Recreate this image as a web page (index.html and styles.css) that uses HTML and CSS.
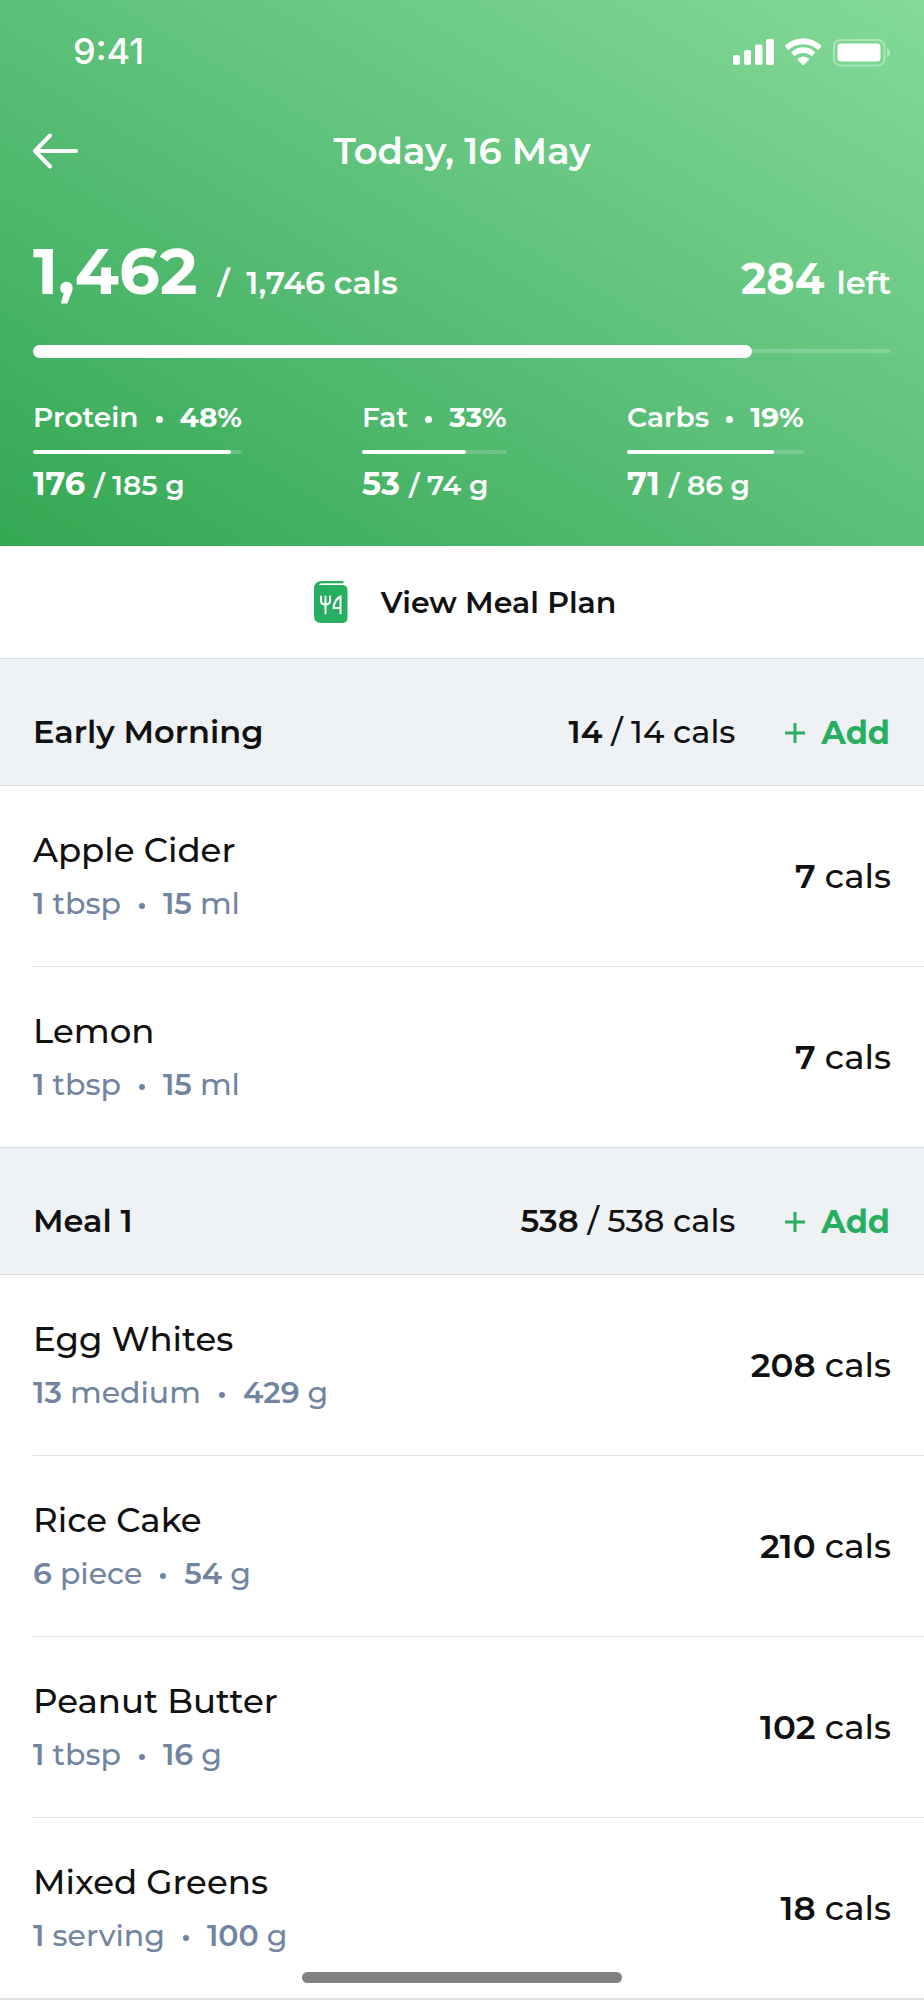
FILE: index.html
```html
<!DOCTYPE html>
<html lang="en">
<head>
<meta charset="utf-8">
<meta name="viewport" content="width=device-width, initial-scale=1">
<title>Today, 16 May</title>
<link rel="stylesheet" href="styles.css">
</head>
<body>
<div class="screen">
  <header class="hero">
    <div class="status">
      <span class="status-time">9:41</span>
      <svg class="status-icons" width="158" height="32" viewBox="0 -4 158 32" fill="#fff" aria-hidden="true">
        <rect x="0" y="16" width="7" height="10" rx="2"/>
        <rect x="11" y="11" width="7" height="15" rx="2"/>
        <rect x="22" y="5.500" width="7.500" height="20.500" rx="2"/>
        <rect x="33" y="0" width="8" height="26" rx="2"/>
        <path d="M52.500 8Q51.600 7 52.600 6A26 26 0 0 1 87.800 6Q88.800 7 87.900 8L85.200 11.300A21.500 21.500 0 0 0 55.200 11.300Z"/>
        <path d="M58.600 14Q58 13.400 58.800 12.700A17 17 0 0 1 81.600 12.700Q82.400 13.400 81.800 14L78.800 17.300A13 13 0 0 0 61.600 17.300Z"/>
        <path d="M64.300 20.600Q64 20 64.800 19.500A9 9 0 0 1 75.600 19.500Q76.400 20 76.100 20.600L70.900 26Q70.200 26.500 69.500 26Z"/>
        <rect x="101" y="1" width="50.500" height="25.500" rx="6.500" fill="none" stroke="#fff" stroke-opacity=".35" stroke-width="2"/>
        <rect x="104.500" y="4.500" width="43" height="18" rx="3.500"/>
        <path d="M154 9.300q3.200 1.500 3.200 4.500t-3.200 4.500z" fill-opacity=".4"/>
      </svg>
    </div>
    <nav class="titlebar">
      <button class="back" type="button" aria-label="Back">
        <svg width="46" height="36" viewBox="0 0 46 36" fill="none" stroke="#fff" stroke-width="4" stroke-linecap="round" stroke-linejoin="round" aria-hidden="true"><path d="M17 2.500 2 18l15 15.500M2 18H43"/></svg>
      </button>
      <h1 class="title">Today, 16 May</h1>
    </nav>
    <div class="summary">
      <p class="eaten"><strong class="eaten-value">1,462</strong><span class="slash">/</span><span>1,746 cals</span></p>
      <p class="left"><strong class="left-value">284 </strong>left</p>
    </div>
    <div class="bar bar-large" role="progressbar" aria-label="Calories" aria-valuenow="1462" aria-valuemax="1746"><div class="bar-fill" style="width:83.800%"></div></div>
    <div class="macros">
      <div class="macro">
        <p class="macro-name">Protein<i class="dot"></i><b>48%</b></p>
        <div class="bar" role="progressbar" aria-label="Protein" aria-valuenow="176" aria-valuemax="185"><div class="bar-fill" style="width:95%"></div></div>
        <p class="macro-amount"><b>176 </b>/ 185 g</p>
      </div>
      <div class="macro">
        <p class="macro-name">Fat<i class="dot"></i><b>33%</b></p>
        <div class="bar" role="progressbar" aria-label="Fat" aria-valuenow="53" aria-valuemax="74"><div class="bar-fill" style="width:72%"></div></div>
        <p class="macro-amount"><b>53 </b>/ 74 g</p>
      </div>
      <div class="macro">
        <p class="macro-name">Carbs<i class="dot"></i><b>19%</b></p>
        <div class="bar" role="progressbar" aria-label="Carbs" aria-valuenow="71" aria-valuemax="86"><div class="bar-fill" style="width:83%"></div></div>
        <p class="macro-amount"><b>71 </b>/ 86 g</p>
      </div>
    </div>
  </header>

  <a class="plan" href="#plan">
    <svg width="34" height="42" viewBox="0 0 34 42" fill="none" aria-hidden="true">
      <path d="M29 0H8Q0 0 0 8V35Q0 42 7 42H28Q33.500 42 33.500 37V9Q33.500 4 28 4H5Q6 2.300 9 2.300H29Q30.500 1 29 0Z" fill="#27ae60"/>
      <path d="M5 3.800Q6 2.500 9 2.500H29.500" stroke="#b9e6cb" stroke-width="1"/>
      <path d="M7 15.500v4q0 4 4.500 4t4.500-4v-4M11.500 15.500V32.500M26.500 32.500V15.500Q20.500 18.500 19.500 27H26.500" stroke="#fff" stroke-width="2" stroke-linecap="round" stroke-linejoin="round"/>
    </svg>
    <span>View Meal Plan</span>
  </a>

  <main>
    <section>
      <div class="meal">
        <h2 class="meal-name">Early Morning</h2>
        <p class="meal-cals"><b>14 </b>/ 14 cals</p>
        <button class="add" type="button"><svg width="20" height="20" viewBox="0 0 20 20" stroke="#27ae60" stroke-width="3" aria-hidden="true"><path d="M10 0v20M0 10h20"/></svg>Add</button>
      </div>
      <ul class="foods">
        <li class="food"><div><h3 class="food-name">Apple Cider</h3><p class="food-size"><b>1</b> tbsp<i class="dot"></i><b>15</b> ml</p></div><p class="food-cals"><b>7</b> cals</p></li>
        <li class="food"><div><h3 class="food-name">Lemon</h3><p class="food-size"><b>1</b> tbsp<i class="dot"></i><b>15</b> ml</p></div><p class="food-cals"><b>7</b> cals</p></li>
      </ul>
    </section>
    <section>
      <div class="meal">
        <h2 class="meal-name">Meal 1</h2>
        <p class="meal-cals"><b>538 </b>/ 538 cals</p>
        <button class="add" type="button"><svg width="20" height="20" viewBox="0 0 20 20" stroke="#27ae60" stroke-width="3" aria-hidden="true"><path d="M10 0v20M0 10h20"/></svg>Add</button>
      </div>
      <ul class="foods">
        <li class="food"><div><h3 class="food-name">Egg Whites</h3><p class="food-size"><b>13</b> medium<i class="dot"></i><b>429</b> g</p></div><p class="food-cals"><b>208</b> cals</p></li>
        <li class="food"><div><h3 class="food-name">Rice Cake</h3><p class="food-size"><b>6</b> piece<i class="dot"></i><b>54</b> g</p></div><p class="food-cals"><b>210</b> cals</p></li>
        <li class="food"><div><h3 class="food-name">Peanut Butter</h3><p class="food-size"><b>1</b> tbsp<i class="dot"></i><b>16</b> g</p></div><p class="food-cals"><b>102</b> cals</p></li>
        <li class="food"><div><h3 class="food-name">Mixed Greens</h3><p class="food-size"><b>1</b> serving<i class="dot"></i><b>100</b> g</p></div><p class="food-cals"><b>18</b> cals</p></li>
      </ul>
    </section>
  </main>
  <div class="home-indicator"></div>
</div>
</body>
</html>
```
FILE: styles.css
```css
* { box-sizing: border-box; }
body, h1, h2, h3, p, ul { margin: 0; padding: 0; }
body {
  background: #eef2f5;
  color: #111;
  font-family: Montserrat, Inter, "Liberation Sans", sans-serif;
  font-size: 34px;
  font-weight: 500;
}
b, strong { font-weight: 600; }
button { border: 0; background: none; padding: 0; font: inherit; color: inherit; }
svg { display: block; flex: none; }

.hero {
  padding: 29px 33px 41px;
  background: linear-gradient(to top right, #33a853, #5cc079 50%, #84da98);
  color: #fff;
}
.status { display: flex; justify-content: space-between; align-items: center; height: 44px; padding-left: 40px; }
.status-time { font-family: Inter, sans-serif; font-size: 36px; font-weight: 500; }
.titlebar { display: grid; grid-template-columns: 1fr auto 1fr; align-items: center; margin-top: 54px; }
.title { font-size: 37px; line-height: 48px; font-weight: 600; }

.summary { display: flex; justify-content: space-between; align-items: baseline; margin-top: 56px; line-height: 80px; font-size: 32px; font-weight: 600; }
.eaten { display: flex; align-items: baseline; }
.eaten-value { font-size: 64px; font-weight: 700; }
.slash { margin: 0 17px 0 20px; }
.left-value { font-size: 43px; font-weight: 700; }

.bar { height: 4px; border-radius: 2px; background: rgba(255, 255, 255, .18); }
.bar-fill { height: 100%; border-radius: 8px; background: #fff; }
.bar-large { display: flex; align-items: center; margin-top: 26px; }
.bar-large .bar-fill { flex: none; height: 13px; }

.macros { display: grid; grid-template-columns: 329fr 265fr 264fr; margin-top: 44px; font-size: 28px; line-height: 40px; font-weight: 600; }
.macro { justify-self: start; }
.macro b { font-weight: 700; }
.macro-name { margin-bottom: 13px; }
.macro-amount { margin-top: 10px; }
.macro-amount b { font-size: 32px; }
.dot { display: inline-block; width: 7px; height: 7px; margin: 0 17px; border-radius: 50%; background: currentColor; vertical-align: middle; }

.plan { display: flex; justify-content: center; align-items: center; gap: 33px; height: 112px; padding-left: 6px; background: #fff; color: inherit; text-decoration: none; font-size: 30px; font-weight: 600; }

.meal { display: flex; align-items: baseline; height: 128px; padding: 49px 34px 0 33px; border-top: 1px solid #d8dee3; border-bottom: 1px solid #d8dee3; background: #eef2f5; font-size: 32px; line-height: 48px; }
.meal-name { flex: 1; font-size: 32px; font-weight: 600; }
.add { display: flex; align-items: center; gap: 16px; margin-left: 50px; color: #27ae60; font-weight: 700; }

.foods { list-style: none; background: #fff; }
.food { display: flex; justify-content: space-between; align-items: center; height: 181px; margin-left: 33px; padding-right: 33px; border-bottom: 1px solid #e2e4e6; }
.food:last-child { height: 180px; border-bottom: 0; }
.food-name { font-size: 34px; line-height: 48px; font-weight: 500; }
.food-size { margin-top: 8px; color: #7285a0; font-size: 30px; line-height: 44px; }
.food-size .dot { width: 6px; height: 6px; margin: 0 18px; }

section:last-child .foods { border-bottom: 2px solid #dde2e7; }

.screen { position: relative; min-height: 100vh; }
.home-indicator { position: absolute; bottom: 17px; left: 50%; width: 320px; height: 11px; margin-left: -160px; border-radius: 6px; background: #828282; }
```
